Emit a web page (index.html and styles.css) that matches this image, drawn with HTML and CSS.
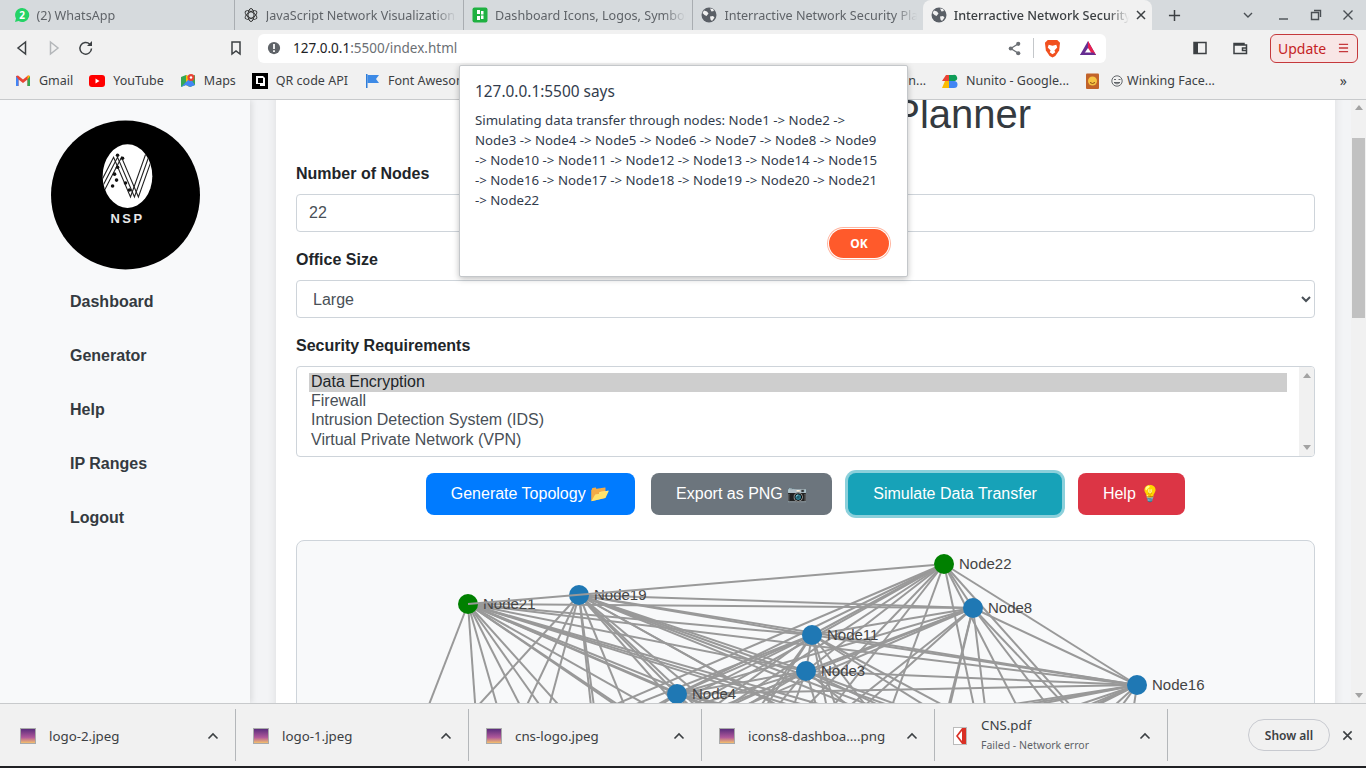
FILE: index.html
```html
<!DOCTYPE html>
<html lang="en">
<head>
  <meta charset="UTF-8">
  <title>Interractive Network Security Planner</title>
  <link rel="stylesheet" href="styles.css">
</head>
<body>

  <!-- TAB STRIP -->
  <div class="tabstrip">
    <div class="tab">
      <svg class="favicon" viewBox="0 0 16 16"><path d="M8 1a7 7 0 0 0-6 10.500L1 15l3.600-1A7 7 0 1 0 8 1z" fill="#25d366"/><text x="8" y="11.500" class="fav-num">2</text></svg>
      <span class="tab-title">(2) WhatsApp</span>
    </div>
    <div class="tab">
      <svg class="favicon" viewBox="0 0 16 16" fill="none" stroke="#333" stroke-width="1"><ellipse cx="8" cy="8" rx="6.500" ry="3" transform="rotate(30 8 8)"/><ellipse cx="8" cy="8" rx="6.500" ry="3" transform="rotate(90 8 8)"/><ellipse cx="8" cy="8" rx="6.500" ry="3" transform="rotate(150 8 8)"/></svg>
      <span class="tab-title">JavaScript Network Visualization</span>
    </div>
    <div class="tab">
      <svg class="favicon" viewBox="0 0 16 16"><rect x="0.500" y="0.500" width="15" height="15" rx="2" fill="#1fb141"/><path d="M5 3h3v4H5zM5 9h3v4H5zM9 4h2.500v3.500H9zM9 8.500h2.500V12H9z" fill="#fff"/></svg>
      <span class="tab-title">Dashboard Icons, Logos, Symbols</span>
    </div>
    <div class="tab tab-last">
      <svg class="favicon" viewBox="0 0 16 16"><use href="#globe"/></svg>
      <span class="tab-title">Interractive Network Security Planner</span>
    </div>
    <div class="tab tab-active">
      <svg class="favicon" viewBox="0 0 16 16"><use href="#globe"/></svg>
      <span class="tab-title">Interractive Network Security Planner</span>
      <svg class="tab-close" viewBox="0 0 10 10"><path d="M1 1l8 8M9 1l-8 8"/></svg>
    </div>
    <svg class="new-tab" viewBox="0 0 14 14"><path d="M7 1v12M1 7h12"/></svg>
    <div class="window-btns">
      <svg class="win-list" viewBox="0 0 12 12"><path d="M2 4l4 4 4-4"/></svg>
      <svg viewBox="0 0 12 12"><path d="M1 10h9"/></svg>
      <svg viewBox="0 0 12 12"><path d="M1.500 3.500h7v7h-7zM4 1.500h6.500v6.500"/></svg>
      <svg viewBox="0 0 12 12"><path d="M1.500 1.500l9 9M10.500 1.500l-9 9"/></svg>
    </div>
  </div>

  <!-- shared globe icon -->
  <svg class="defs" width="0" height="0">
    <symbol id="globe" viewBox="0 0 16 16">
      <circle cx="8" cy="8" r="7.500" fill="#5a5f66"/>
      <path d="M3 3.500l3 1 1.500 2-2 2.500-2-1-2-2zM9 9.500l3-.5 1.500 1.500-2.500 3.500-1.500-1.500zM9 1.500l3 .5 1 2-2.500.5z" fill="#f1f1f1"/>
    </symbol>
  </svg>

  <!-- TOOLBAR -->
  <div class="toolbar">
    <button class="tool-btn"><svg viewBox="0 0 16 16"><path d="M11.500 2L4 8l7.500 6z"/></svg></button>
    <button class="tool-btn tool-off"><svg viewBox="0 0 16 16"><path d="M4.500 2L12 8l-7.500 6z"/></svg></button>
    <button class="tool-btn"><svg viewBox="0 0 16 16"><path d="M13.500 8.500a5.800 5.800 0 1 1-1.700-4.300"/><path d="M14 1v5H9" class="solid"/></svg></button>
    <button class="tool-btn bookmark-btn"><svg viewBox="0 0 16 16"><path d="M4 2h8v12l-4-3-4 3z"/></svg></button>
    <div class="address">
      <svg class="info-icon" viewBox="0 0 16 16"><circle cx="8" cy="8" r="7" fill="#5f6368"/><path d="M7 3.500h2V9H7zM7 10.500h2v2H7z" fill="#fff"/></svg>
      <span class="url">127.0.0.1<span class="url-rest">:5500/index.html</span></span>
      <svg class="share-icon" viewBox="0 0 16 16"><path d="M12 3L4 8l8 5" fill="none" stroke="#6b6f74" stroke-width="1.300"/><circle cx="12" cy="3" r="2.200" fill="#6b6f74"/><circle cx="4" cy="8" r="2.200" fill="#6b6f74"/><circle cx="12" cy="13" r="2.200" fill="#6b6f74"/></svg>
      <span class="addr-sep"></span>
      <svg class="brave-icon" viewBox="0 0 18 20"><path d="M4 1h10l3 3-1 8-4 6-3 1.500L6 18l-4-6-1-8z" fill="#f1501f"/><path d="M5 6l4 1 4-1 1 3-3 3 1 2-3 2-3-2 1-2-3-3z" fill="#fff"/></svg>
      <svg class="bat-icon" viewBox="0 0 20 18"><path d="M10 1L1 17h18z" fill="#662d91"/><path d="M10 1l9 16H14L10 9z" fill="#e9204f"/><path d="M10 9l-4 6h8z" fill="#fff"/><path d="M1 17l3-3h12l3 3z" fill="#662d91"/></svg>
    </div>
    <button class="tool-btn sidebar-btn"><svg viewBox="0 0 16 16"><path d="M2 2.500h12v11H2z"/><path d="M2 2.500h4v11H2z" class="solid"/></svg></button>
    <button class="tool-btn wallet-btn"><svg viewBox="0 0 16 16"><path d="M2 5V3.500h10V5M14.500 5H2v8.500h12.500zM14.500 8H10.500v2.500h4"/></svg></button>
    <button class="update-btn">Update
      <svg viewBox="0 0 12 12"><path d="M1 2h10M1 6h10M1 10h10"/></svg>
    </button>
  </div>

  <!-- BOOKMARKS -->
  <div class="bookmarks">
    <div class="bm"><svg viewBox="0 0 16 16"><path d="M1 3v10h2.500V6.500L8 10l4.500-3.500V13H15V3l-2-.5L8 6.500 3 2.500z" fill="#ea4335"/><path d="M1 3v10h2.500V6.500z" fill="#4285f4"/><path d="M15 3v10h-2.500V6.500z" fill="#34a853"/><path d="M12.500 6.500L15 3l-2-.5-.5.500z" fill="#fbbc04"/></svg>Gmail</div>
    <div class="bm"><svg viewBox="0 0 16 16"><rect y="2" width="16" height="12" rx="3" fill="#f00"/><path d="M6.500 5.500v5l4-2.500z" fill="#fff"/></svg>YouTube</div>
    <div class="bm"><svg viewBox="0 0 16 16"><path d="M1 4l5-2 4 2 5-2v10l-5 2-4-2-5 2z" fill="#34a853"/><path d="M6 2l4 2v10l-4-2z" fill="#fbbc04"/><path d="M1 14l9-9 5 7-5 2-4-2z" fill="#4285f4"/><circle cx="11" cy="4.500" r="3.500" fill="#ea4335"/><circle cx="11" cy="4.500" r="1.200" fill="#fff"/></svg>Maps</div>
    <div class="bm"><svg viewBox="0 0 16 16"><rect width="16" height="16" fill="#000"/><path d="M4 3h7l2 2v8H8v-2H4z" fill="#fff"/><rect x="6" y="5" width="5" height="5" fill="#000"/></svg>QR code API</div>
    <div class="bm"><svg viewBox="0 0 16 16"><path d="M2 1h1.500v14H2z" fill="#2f7dd9"/><path d="M3.500 2H15l-3 4 3 4H3.500z" fill="#3d8ae6"/></svg>Font Awesome</div>
    <div class="bm-right">
      <div class="bm bm-cut">Generation...</div>
      <div class="bm"><svg viewBox="0 0 16 16"><path d="M0 8l4-6h3v6z" fill="#ea4335"/><path d="M0 15l3-7h4v7z" fill="#fbbc04"/><path d="M7 2h4a3 3 0 0 1 2 6H7z" fill="#0f9d58"/><path d="M7 8h5a3.500 3.500 0 0 1 0 7H7z" fill="#4285f4"/></svg>Nunito - Google...</div>
      <div class="bm"><svg viewBox="0 0 16 16"><rect x="1" y="0.500" width="13" height="15.500" rx="1" fill="#c2632a"/><circle cx="7.500" cy="8" r="4.500" fill="#f6c343"/><path d="M5 9.500q2.500 2 5 0" stroke="#8a4a12" fill="none"/></svg><svg class="wink" viewBox="0 0 12 12"><circle cx="6" cy="6" r="5.200"/><path d="M3 4.500h2M7.500 4.500h2M3 7.500q3 3 6 0z"/></svg>Winking Face...</div>
      <span class="bm-more">»</span>
    </div>
  </div>

  <!-- PAGE -->
  <div class="viewport">
    <aside class="sidebar">
      <svg class="logo" viewBox="0 0 150 150">
        <defs><clipPath id="badge"><ellipse cx="77" cy="56" rx="25" ry="32"/></clipPath></defs>
        <circle cx="75" cy="75" r="75" fill="#000"/>
        <ellipse cx="77" cy="56" rx="25" ry="32" fill="#fff"/>
        <g fill="none" stroke="#222" stroke-width="1.100" clip-path="url(#badge)">
          <path d="M46 70L63 37 80 77 96 32"/>
          <path d="M50 70L67 37 84 77 100 32"/>
          <path d="M54 70L71 37 88 77 104 32"/>
        </g>
        <g fill="#111">
          <circle cx="67" cy="35" r="1.800"/><circle cx="72" cy="38" r="1.800"/><circle cx="67" cy="47" r="1.800"/>
          <circle cx="64" cy="54" r="1.800"/><circle cx="66" cy="60" r="1.800"/><circle cx="62" cy="66" r="1.800"/><circle cx="75" cy="63" r="1.800"/><circle cx="79" cy="70" r="1.800"/>
        </g>
        <text x="77" y="103" class="logo-text">NSP</text>
      </svg>
      <nav class="side-nav">
        <a href="#">Dashboard</a>
        <a href="#">Generator</a>
        <a href="#">Help</a>
        <a href="#">IP Ranges</a>
        <a href="#">Logout</a>
      </nav>
    </aside>

    <main class="main">
      <div class="card">
        <h1>Network Security Planner</h1>

        <div class="form-group">
          <label for="nodeCount">Number of Nodes</label>
          <input id="nodeCount" class="form-control" type="text" value="22">
        </div>

        <div class="form-group">
          <label for="officeSize">Office Size</label>
          <select id="officeSize" class="form-control">
            <option>Large</option>
          </select>
        </div>

        <div class="form-group">
          <label>Security Requirements</label>
          <div class="listbox" role="listbox">
            <div class="list-options">
              <div class="list-option selected">Data Encryption</div>
              <div class="list-option">Firewall</div>
              <div class="list-option">Intrusion Detection System (IDS)</div>
              <div class="list-option">Virtual Private Network (VPN)</div>
            </div>
            <div class="list-scroll"><span class="arrow-up"></span><span class="arrow-down"></span></div>
          </div>
        </div>

        <div class="actions">
          <button class="btn btn-blue">Generate Topology 📂</button>
          <button class="btn btn-grey">Export as PNG 📷</button>
          <button class="btn btn-teal">Simulate Data Transfer</button>
          <button class="btn btn-red">Help 💡</button>
        </div>

        <div class="graph-box">
          <svg id="graph" viewBox="297 541 1017 498"></svg>
        </div>
      </div>
    </main>

    <div class="page-scroll">
      <span class="arrow-up"></span>
      <div class="page-thumb"></div>
      <span class="arrow-down"></span>
    </div>
  </div>

  <!-- DOWNLOAD SHELF -->
  <div class="shelf">
    <div class="dl"><span class="dl-img"></span><span class="dl-name">logo-2.jpeg</span><svg class="dl-caret" viewBox="0 0 12 8"><path d="M1.500 6.500L6 2l4.500 4.500"/></svg></div>
    <div class="dl"><span class="dl-img"></span><span class="dl-name">logo-1.jpeg</span><svg class="dl-caret" viewBox="0 0 12 8"><path d="M1.500 6.500L6 2l4.500 4.500"/></svg></div>
    <div class="dl"><span class="dl-img"></span><span class="dl-name">cns-logo.jpeg</span><svg class="dl-caret" viewBox="0 0 12 8"><path d="M1.500 6.500L6 2l4.500 4.500"/></svg></div>
    <div class="dl"><span class="dl-img"></span><span class="dl-name">icons8-dashboa....png</span><svg class="dl-caret" viewBox="0 0 12 8"><path d="M1.500 6.500L6 2l4.500 4.500"/></svg></div>
    <div class="dl">
      <svg class="dl-pdf" viewBox="0 0 14 18"><rect x="0.500" y="0.500" width="13" height="17" fill="#fff" stroke="#bbb"/><path d="M9 1h4v16H9L3 9z" fill="#d93025"/><path d="M9 4v10L5 9z" fill="#fff"/></svg>
      <div class="dl-text"><span class="dl-name">CNS.pdf</span><span class="dl-status">Failed - Network error</span></div>
      <svg class="dl-caret" viewBox="0 0 12 8"><path d="M1.500 6.500L6 2l4.500 4.500"/></svg>
    </div>
    <button class="show-all">Show all</button>
    <svg class="shelf-close" viewBox="0 0 12 12"><path d="M1.500 1.500l9 9M10.500 1.500l-9 9"/></svg>
  </div>

  <!-- ALERT -->
  <div class="dialog">
    <div class="dialog-title">127.0.0.1:5500 says</div>
    <p class="dialog-msg">Simulating data transfer through nodes: Node1 -&gt; Node2 -&gt;<br>Node3 -&gt; Node4 -&gt; Node5 -&gt; Node6 -&gt; Node7 -&gt; Node8 -&gt; Node9<br>-&gt; Node10 -&gt; Node11 -&gt; Node12 -&gt; Node13 -&gt; Node14 -&gt; Node15<br>-&gt; Node16 -&gt; Node17 -&gt; Node18 -&gt; Node19 -&gt; Node20 -&gt; Node21<br>-&gt; Node22</p>
    <div class="dialog-foot"><button class="ok-btn">OK</button></div>
  </div>

  <script src="graph.js"></script>
</body>
</html>
```

FILE: styles.css
```css
* {
  box-sizing: border-box;
  margin: 0;
  padding: 0;
}

html, body {
  height: 100%;
  overflow: hidden;
}

body {
  display: flex;
  flex-direction: column;
  width: 1366px;
  height: 768px;
  font-family: 'Noto Sans', sans-serif;
  color: #3c4043;
  background: #f1f1f1;
}

.defs {
  position: absolute;
}

/* ---- tabs ---- */
.tabstrip {
  display: flex;
  align-items: flex-end;
  height: 30px;
  flex: none;
  padding-left: 5.500px;
  background: #d6dadd;
}

.tab {
  display: flex;
  align-items: center;
  gap: 7px;
  width: 229.300px;
  height: 30px;
  flex: none;
  padding: 0 6px 0 8px;
  border-right: 1px solid #a9adb1;
  font-size: 12.600px;
  color: #5f6368;
}

.tab-last {
  border-right: none;
}

.tab-active {
  border-right: none;
  border-radius: 8px 8px 0 0;
  background: #f1f1f1;
  color: #3c4043;
  font-weight: 500;
}

.favicon {
  width: 16px;
  height: 16px;
  flex: none;
}

.fav-num {
  font-size: 10px;
  font-weight: bold;
  fill: #fff;
  text-anchor: middle;
}

.tab-title {
  flex: 1;
  overflow: hidden;
  white-space: nowrap;
  -webkit-mask-image: linear-gradient(to right, #000 88%, transparent);
  mask-image: linear-gradient(to right, #000 88%, transparent);
}

.tab-close {
  width: 10px;
  height: 10px;
  flex: none;
  fill: none;
  stroke: #3c4043;
  stroke-width: 1.500;
}

.new-tab {
  width: 13px;
  height: 13px;
  margin: 0 0 8px 16px;
  fill: none;
  stroke: #3c4043;
  stroke-width: 1.600;
}

.window-btns {
  display: flex;
  gap: 20px;
  margin-left: 61px;
  margin-bottom: 9px;
}

.window-btns svg {
  width: 12px;
  height: 12px;
  fill: none;
  stroke: #4a4f54;
  stroke-width: 1.400;
}

.window-btns .win-list {
  margin-right: 4px;
}

/* ---- toolbar ---- */
.toolbar {
  display: flex;
  align-items: center;
  height: 36px;
  flex: none;
  padding-left: 6px;
  background: #f1f1f1;
}

.tool-btn {
  display: flex;
  align-items: center;
  justify-content: center;
  width: 32px;
  height: 32px;
  border: none;
  background: transparent;
}

.tool-btn svg {
  width: 16px;
  height: 16px;
  fill: none;
  stroke: #3c4043;
  stroke-width: 1.500;
}

.tool-btn .solid {
  fill: #3c4043;
  stroke: none;
}

.tool-off svg {
  stroke: #b4b7ba;
}

.bookmark-btn {
  margin-left: 118px;
}

.address {
  display: flex;
  align-items: center;
  width: 848px;
  height: 29px;
  margin-left: 6px;
  padding: 0 9px;
  border-radius: 6px;
  background: #fff;
  font-size: 13.500px;
}

.info-icon {
  width: 14px;
  height: 14px;
  flex: none;
}

.url {
  margin-left: 12px;
  color: #202124;
  flex: 1;
}

.url-rest {
  color: #6b6f74;
}

.share-icon {
  width: 15px;
  height: 15px;
  margin-right: 11px;
}

.addr-sep {
  width: 1px;
  height: 20px;
  background: #c4c7ca;
  margin-right: 10px;
}

.brave-icon {
  width: 17px;
  height: 19px;
  margin-right: 18px;
}

.bat-icon {
  width: 18px;
  height: 16px;
}

.sidebar-btn {
  margin-left: 78px;
}

.wallet-btn {
  margin-left: 8px;
}

.update-btn {
  display: flex;
  align-items: center;
  justify-content: space-between;
  width: 88px;
  height: 29px;
  margin-left: 14px;
  padding: 0 8px 0 7px;
  border: 1px solid #c5383c;
  border-radius: 6px;
  background: #f8e6e6;
  color: #c5221f;
  font-family: inherit;
  font-size: 14px;
}

.update-btn svg {
  width: 11px;
  height: 12px;
  fill: none;
  stroke: #c5383c;
  stroke-width: 1.500;
}

/* ---- bookmarks ---- */
.bookmarks {
  display: flex;
  align-items: center;
  height: 34px;
  flex: none;
  padding: 0 19px 4px 15px;
  gap: 16px;
  border-bottom: 1px solid #c8cacc;
  background: #f1f1f1;
  font-size: 12.500px;
}

.bm {
  display: flex;
  align-items: center;
  gap: 8px;
  white-space: nowrap;
}

.bm svg {
  width: 16px;
  height: 16px;
  flex: none;
}

.bm-right {
  display: flex;
  align-items: center;
  gap: 16px;
  margin-left: auto;
}

.bm .wink {
  width: 12px;
  height: 12px;
  margin: 0 -4px 0 2px;
  fill: none;
  stroke: #55595e;
  stroke-width: 0.900;
}

.bm-more {
  margin-left: 109px;
  font-size: 14px;
}

/* ---- page ---- */
.viewport {
  display: flex;
  flex: 1;
  min-height: 0;
  overflow: hidden;
  background: #f3f4f6;
  font-family: 'Liberation Sans', Arial, sans-serif;
  color: #212529;
}

.sidebar {
  width: 250px;
  flex: none;
  padding-top: 20px;
  background: #f8f9fa;
  box-shadow: 2px 0 6px rgba(0, 0, 0, 0.1);
  position: relative;
}

.logo {
  display: block;
  width: 149px;
  height: 150px;
  margin-left: 51px;
}

.logo-text {
  font-family: 'Liberation Sans', Arial, sans-serif;
  font-size: 13px;
  font-weight: bold;
  letter-spacing: 2.500px;
  fill: #e8e8e8;
  text-anchor: middle;
}

.side-nav {
  display: flex;
  flex-direction: column;
  gap: 30px;
  margin-top: 20px;
  padding-left: 70px;
}

.side-nav a {
  height: 24px;
  line-height: 24px;
  font-size: 16px;
  font-weight: bold;
  color: #343a40;
  text-decoration: none;
}

.main {
  flex: 1;
  min-width: 0;
  overflow: hidden;
  padding: 0 16px 0 26px;
}

.card {
  margin-top: -30px;
  padding: 20px;
  border-radius: 8px;
  background: #fff;
  box-shadow: 0 0 10px rgba(0, 0, 0, 0.1);
}

h1 {
  margin-bottom: 24px;
  font-size: 40px;
  font-weight: 400;
  line-height: 48px;
  text-align: center;
  color: #343a40;
}

.form-group {
  margin-bottom: 16px;
}

.form-group label {
  display: block;
  height: 24px;
  margin-bottom: 8px;
  line-height: 24px;
  font-size: 16px;
  font-weight: bold;
}

.form-control {
  display: block;
  width: 100%;
  height: 38px;
  padding: 6px 12px;
  border: 1px solid #ced4da;
  border-radius: 4px;
  background: #fff;
  font-family: inherit;
  font-size: 16px;
  color: #495057;
}

.listbox {
  display: flex;
  height: 91px;
  border: 1px solid #ced4da;
  border-radius: 4px;
  background: #fff;
  overflow: hidden;
}

.list-options {
  flex: 1;
  padding: 6px 12px;
  font-size: 16px;
  color: #495057;
}

.list-option {
  height: 19.200px;
  line-height: 18px;
  padding: 0 2px;
}

.list-option.selected {
  background: #cecece;
  color: #212529;
}

.list-scroll {
  display: flex;
  flex-direction: column;
  justify-content: space-between;
  align-items: center;
  width: 15px;
  padding: 6px 0;
  background: #f1f1f1;
}

.arrow-up, .arrow-down {
  width: 0;
  height: 0;
  border-left: 4px solid transparent;
  border-right: 4px solid transparent;
}

.arrow-up {
  border-bottom: 5px solid #a3a3a3;
}

.arrow-down {
  border-top: 5px solid #a3a3a3;
}

.actions {
  display: flex;
  justify-content: center;
  gap: 16px;
  margin-bottom: 25px;
}

.btn {
  height: 42px;
  padding: 0 25px;
  border: none;
  border-radius: 8px;
  color: #fff;
  font-family: inherit;
  font-size: 16px;
  line-height: 20px;
}

.btn-blue { background: #007bff; }
.btn-grey { background: #6c757d; }
.btn-red { background: #dc3545; }

.btn-teal {
  background: #17a2b8;
  box-shadow: 0 0 0 3px rgba(23, 162, 184, 0.5);
}

.graph-box {
  height: 500px;
  overflow: hidden;
  border: 1px solid #ced4da;
  border-radius: 8px;
  background: #f8f9fa;
}

#graph {
  display: block;
  width: 100%;
  height: 100%;
}

#graph line {
  stroke: #999;
  stroke-width: 2;
}

#graph text {
  font-size: 15px;
  fill: #444;
  dominant-baseline: middle;
}

.page-scroll {
  display: flex;
  flex-direction: column;
  align-items: center;
  width: 15px;
  flex: none;
  padding: 5px 0;
  background: #f1f1f1;
}

.page-thumb {
  width: 13px;
  height: 180px;
  margin-top: 28px;
  margin-bottom: auto;
  background: #c1c1c1;
}

/* ---- download shelf ---- */
.shelf {
  display: flex;
  align-items: center;
  height: 65px;
  flex: none;
  padding-left: 3px;
  border-top: 1px solid #c8cacc;
  border-bottom: 2px solid #202124;
  background: #f1f1f1;
  font-size: 13.300px;
}

.dl {
  display: flex;
  align-items: center;
  width: 233px;
  height: 52px;
  padding: 2px 16px 0 17px;
  border-right: 1px solid #b4b7ba;
}

.dl-img {
  width: 16px;
  height: 16px;
  flex: none;
  margin-right: 13px;
  border: 1px solid #aaa;
  background: linear-gradient(#5b2d7c, #b0589a 60%, #f3c06e);
}

.dl-pdf {
  width: 14px;
  height: 18px;
  flex: none;
  margin: 0 14px 0 1px;
}

.dl-name {
  flex: none;
  white-space: nowrap;
}

.dl-text {
  display: flex;
  flex-direction: column;
  gap: 4px;
  margin-top: -5px;
}

.dl-status {
  font-size: 10.500px;
  color: #5f6368;
}

.dl-caret {
  width: 12px;
  height: 8px;
  margin-left: auto;
  fill: none;
  stroke: #3c4043;
  stroke-width: 1.600;
}

.show-all {
  width: 82px;
  height: 32px;
  margin-left: 80px;
  border: 1px solid #c8cad0;
  border-radius: 16px;
  background: #f1f1f1;
  color: #3c4043;
  font-family: inherit;
  font-size: 12px;
  font-weight: 600;
}

.shelf-close {
  width: 11px;
  height: 11px;
  margin-left: 12px;
  fill: none;
  stroke: #3c4043;
  stroke-width: 1.700;
}

/* ---- alert over everything ---- */
.dialog {
  position: absolute;
  left: 459px;
  top: 65px;
  width: 449px;
  height: 212px;
  padding: 15px;
  border: 1px solid #c4c7ca;
  border-radius: 2px;
  background: #fff;
  box-shadow: 0 2px 6px rgba(0, 0, 0, 0.25);
  color: #323c4d;
}

.dialog-title {
  margin-top: 1px;
  font-size: 15.400px;
  line-height: 20px;
}

.dialog-msg {
  margin-top: 8px;
  font-size: 13.250px;
  line-height: 20px;
  white-space: nowrap;
}

.dialog-foot {
  display: flex;
  justify-content: flex-end;
  margin-top: 19px;
  padding-right: 3px;
}

.ok-btn {
  width: 60px;
  height: 29px;
  border: none;
  border-radius: 15px;
  background: #ff5a2b;
  box-shadow: 0 0 0 1px #fff, 0 0 0 2px #ffb5a0;
  color: #fff;
  font-family: inherit;
  font-size: 12px;
  font-weight: bold;
}
```

FILE: graph.js
```js
// node positions are in page pixels, the svg viewBox starts at the box corner
const nodes = [
  { id: "Node22", x: 944, y: 564, core: true },
  { id: "Node8", x: 973, y: 608 },
  { id: "Node11", x: 812, y: 635 },
  { id: "Node3", x: 806, y: 671 },
  { id: "Node4", x: 677, y: 694 },
  { id: "Node16", x: 1137, y: 685 },
  { id: "Node21", x: 468, y: 604, core: true },
  { id: "Node19", x: 579, y: 595 },
  { id: "Node1", x: 392, y: 800 },
  { id: "Node2", x: 482, y: 800 },
  { id: "Node5", x: 524, y: 800 },
  { id: "Node6", x: 600, y: 790 },
  { id: "Node7", x: 680, y: 840 },
  { id: "Node9", x: 760, y: 800 },
  { id: "Node10", x: 850, y: 820 },
  { id: "Node12", x: 930, y: 790 },
  { id: "Node13", x: 1000, y: 830 },
  { id: "Node14", x: 1060, y: 790 },
  { id: "Node15", x: 1120, y: 800 },
  { id: "Node17", x: 1155, y: 800 },
  { id: "Node18", x: 620, y: 900 },
  { id: "Node20", x: 900, y: 900 }
];

const skipped = ["Node22-Node19", "Node21-Node19", "Node22-Node21"];
const svg = document.getElementById("graph");
const NS = "http://www.w3.org/2000/svg";

function add(tag, attrs, text) {
  const el = document.createElementNS(NS, tag);
  Object.keys(attrs).forEach(k => el.setAttribute(k, attrs[k]));
  if (text) el.textContent = text;
  svg.appendChild(el);
}

nodes.forEach((a, i) => {
  nodes.slice(i + 1).forEach((b, k) => {
    const j = i + 1 + k;
    if (skipped.includes(a.id + "-" + b.id)) return;
    // the middle nodes only link to some of the lower ones
    if (j >= 8 && i < 6 && (i + j) % 3 === 0) return;
    add("line", { x1: a.x, y1: a.y, x2: b.x, y2: b.y });
  });
});

nodes.forEach(n => {
  add("circle", { cx: n.x, cy: n.y, r: 10, fill: n.core ? "#008000" : "#1f78b4" });
  add("text", { x: n.x + 15, y: n.y + 1 }, n.id);
});

// this one edge runs over the green dot of Node21, and stops at the edge of Node22
add("line", { x1: 468, y1: 604, x2: 934, y2: 565 });
```
